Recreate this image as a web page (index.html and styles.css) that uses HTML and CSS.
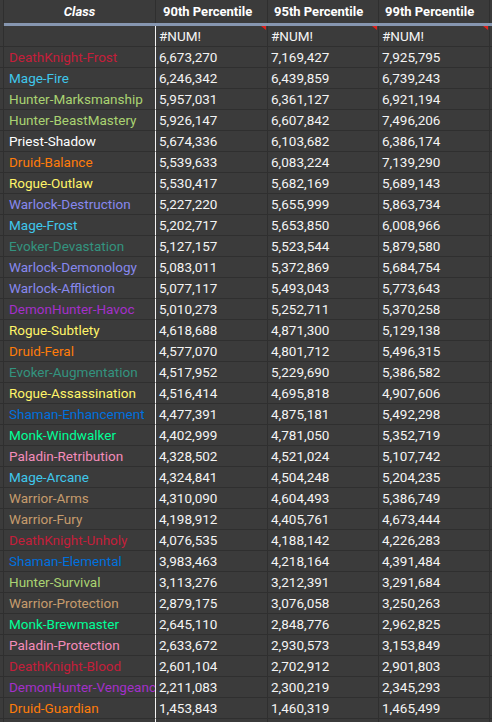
FILE: index.html
```html
<!DOCTYPE html>
<html>
<head>
<meta charset="utf-8">
<link rel="stylesheet" href="styles.css">
</head>
<body>
<div class="sheet">
  <div class="row head">
    <div class="c c0"></div>
    <div class="c c1 h-class">Class</div>
    <div class="c c2 h">90th Percentile</div>
    <div class="c c3 h">95th Percentile</div>
    <div class="c c4 h">99th Percentile</div>
    <div class="c c5"></div>
  </div>
  <div class="bar"></div>
  <div id="body"></div>
</div>
<script src="app.js"></script>
</body>
</html>
```
FILE: styles.css
```css
* { box-sizing: border-box; }
body {
  margin: 0;
  background: #3b3b3b;
  font-family: Roboto, "Liberation Sans", sans-serif;
  color: #f4f4f4;
  overflow: hidden;
}
.sheet { width: 492px; }
.row {
  display: grid;
  grid-template-columns: 3px 152px 112px 111px 111px 3px;
  height: 21px;
}
.c {
  border-left: 1px solid #2f2f2f;
  border-bottom: 1px solid #2f2f2f;
  white-space: nowrap;
  overflow: hidden;
  font-size: 13.5px;
  line-height: 20px;
  padding-left: 3px;
  position: relative;
}
.c0 { border-left: none; padding: 0; }
.c1 { padding-left: 5px; }
.row .c2 { border-left-color: #f2f2f2; }
.head { height: 23px; }
.head .c {
  border-bottom: none;
  line-height: 23px;
  font-weight: 700;
  font-size: 13px;
  color: #ffffff;
}
.head .c2 { border-left-color: #2f2f2f; padding-left: 7px; }
.head .c3, .head .c4 { padding-left: 6px; }
.head .h-class { text-align: center; font-style: italic; padding-left: 0; }
.bar {
  height: 3px;
  margin-left: 4px;
  background: #8696b0;
}
.note::after {
  content: "";
  position: absolute;
  right: 1px;
  top: 0;
  border-top: 4px solid #e0201c;
  border-left: 5px solid transparent;
}
.dk { color: #c41e3a; }
.mage { color: #3fc7eb; }
.hunter { color: #aad372; }
.priest { color: #ffffff; }
.druid { color: #ff7c0a; }
.rogue { color: #fff468; }
.warlock { color: #8788ee; }
.evoker { color: #33937f; }
.dh { color: #a330c9; }
.shaman { color: #0070dd; }
.monk { color: #00ff98; }
.paladin { color: #f48cba; }
.warrior { color: #c69b6d; }
```
FILE: app.js
```js
var data = [
  ["", "", "#NUM!", "#NUM!", "#NUM!"],
  ["dk", "DeathKnight-Frost", "6,673,270", "7,169,427", "7,925,795"],
  ["mage", "Mage-Fire", "6,246,342", "6,439,859", "6,739,243"],
  ["hunter", "Hunter-Marksmanship", "5,957,031", "6,361,127", "6,921,194"],
  ["hunter", "Hunter-BeastMastery", "5,926,147", "6,607,842", "7,496,206"],
  ["priest", "Priest-Shadow", "5,674,336", "6,103,682", "6,386,174"],
  ["druid", "Druid-Balance", "5,539,633", "6,083,224", "7,139,290"],
  ["rogue", "Rogue-Outlaw", "5,530,417", "5,682,169", "5,689,143"],
  ["warlock", "Warlock-Destruction", "5,227,220", "5,655,999", "5,863,734"],
  ["mage", "Mage-Frost", "5,202,717", "5,653,850", "6,008,966"],
  ["evoker", "Evoker-Devastation", "5,127,157", "5,523,544", "5,879,580"],
  ["warlock", "Warlock-Demonology", "5,083,011", "5,372,869", "5,684,754"],
  ["warlock", "Warlock-Affliction", "5,077,117", "5,493,043", "5,773,643"],
  ["dh", "DemonHunter-Havoc", "5,010,273", "5,252,711", "5,370,258"],
  ["rogue", "Rogue-Subtlety", "4,618,688", "4,871,300", "5,129,138"],
  ["druid", "Druid-Feral", "4,577,070", "4,801,712", "5,496,315"],
  ["evoker", "Evoker-Augmentation", "4,517,952", "5,229,690", "5,386,582"],
  ["rogue", "Rogue-Assassination", "4,516,414", "4,695,818", "4,907,606"],
  ["shaman", "Shaman-Enhancement", "4,477,391", "4,875,181", "5,492,298"],
  ["monk", "Monk-Windwalker", "4,402,999", "4,781,050", "5,352,719"],
  ["paladin", "Paladin-Retribution", "4,328,502", "4,521,024", "5,107,742"],
  ["mage", "Mage-Arcane", "4,324,841", "4,504,248", "5,204,235"],
  ["warrior", "Warrior-Arms", "4,310,090", "4,604,493", "5,386,749"],
  ["warrior", "Warrior-Fury", "4,198,912", "4,405,761", "4,673,444"],
  ["dk", "DeathKnight-Unholy", "4,076,535", "4,188,142", "4,226,283"],
  ["shaman", "Shaman-Elemental", "3,983,463", "4,218,164", "4,391,484"],
  ["hunter", "Hunter-Survival", "3,113,276", "3,212,391", "3,291,684"],
  ["warrior", "Warrior-Protection", "2,879,175", "3,076,058", "3,250,263"],
  ["monk", "Monk-Brewmaster", "2,645,110", "2,848,776", "2,962,825"],
  ["paladin", "Paladin-Protection", "2,633,672", "2,930,573", "3,153,849"],
  ["dk", "DeathKnight-Blood", "2,601,104", "2,702,912", "2,901,803"],
  ["dh", "DemonHunter-Vengeance", "2,211,083", "2,300,219", "2,345,293"],
  ["druid", "Druid-Guardian", "1,453,843", "1,460,319", "1,465,499"],
  ["", "", "", "", ""]
];
var body = document.getElementById("body");
data.forEach(function (d, i) {
  var row = document.createElement("div");
  row.className = "row";
  var cells = ["c0", "c1 " + d[0], "c2", "c3", "c4", "c5"];
  var texts = ["", d[1], d[2], d[3], d[4], ""];
  cells.forEach(function (cls, j) {
    var c = document.createElement("div");
    c.className = "c " + cls + (i === 0 && j >= 2 && j <= 4 ? " note" : "");
    c.textContent = texts[j];
    row.appendChild(c);
  });
  body.appendChild(row);
});
```
